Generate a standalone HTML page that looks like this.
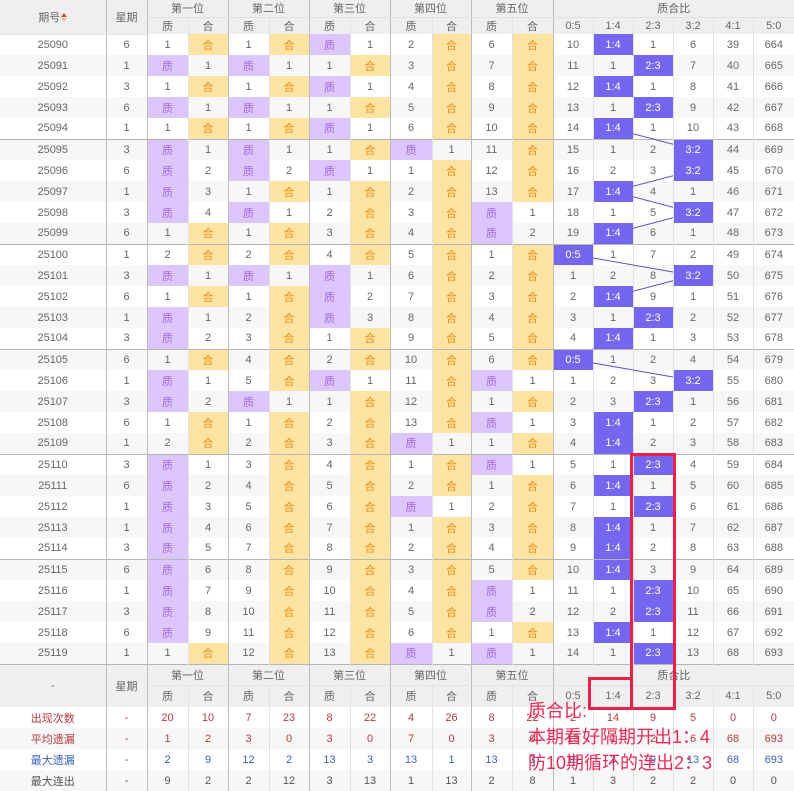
<!DOCTYPE html>
<html><head><meta charset="utf-8">
<style>
*{margin:0;padding:0;box-sizing:border-box}
body{width:794px;height:790px;overflow:hidden;background:#fff;position:relative;font-family:"Liberation Sans","Noto Sans CJK SC",sans-serif}
table{border-collapse:collapse;table-layout:fixed;width:794px;position:absolute;left:0;top:0}
td,th{text-align:center;font-size:11px;color:#666;font-weight:normal;height:21px;padding:0;border-left:1px solid #e2e2e2;white-space:nowrap;overflow:hidden}
th{background:#efefef;color:#666;height:17px}
thead tr:first-child th{border-bottom:1px solid #e2e2e2}
.L{border-left:1px solid #bdbdbd}
tbody tr:nth-child(even) td{background:#f7f7f7}
tbody tr.g td{border-top:1px solid #b5b5b5}
td.q{background:#dcc6fb!important;color:#a36ae0}
td.h{background:#fde4a2!important;color:#ee8a10}
td.b{background:#7466ee!important;color:#fff}
.fh th{height:21px;background:#efefef}
.fh2 th{height:22px}
.ft td{height:21px}
.ft tr:nth-child(even) td{background:#f7f7f7}
.r td{color:#b8393d}.bl td{color:#3c5fc4}.dk td{color:#555}
.sort{display:inline-block;vertical-align:middle;margin-left:1px;width:6px;height:9px;position:relative}
.sort:before{content:"";position:absolute;left:0;top:0;border-left:3px solid transparent;border-right:3px solid transparent;border-bottom:4px solid #e0404a}
.sort:after{content:"";position:absolute;left:0;top:5px;border-left:3px solid transparent;border-right:3px solid transparent;border-top:4px solid #f5b5bd}
.box{position:absolute;border:3px solid #e8204a}
.note{position:absolute;left:528px;color:#ee2a55;font-size:18px;line-height:25px;font-family:"Liberation Sans","Noto Sans CJK SC",sans-serif;white-space:nowrap}
</style></head><body>
<table>
<colgroup><col style="width:106px"><col style="width:41px"><col style="width:41px"><col style="width:40px"><col style="width:41px"><col style="width:40px"><col style="width:41px"><col style="width:40px"><col style="width:42px"><col style="width:39px"><col style="width:41px"><col style="width:41px"><col style="width:40px"><col style="width:40px"><col style="width:40px"><col style="width:40px"><col style="width:40px"><col style="width:41px"></colgroup>
<thead>
<tr><th rowspan="2" style="border-left:none">期号<span class="sort"></span></th><th rowspan="2" class="L">星期</th><th colspan="2" class="L">第一位</th><th colspan="2" class="L">第二位</th><th colspan="2" class="L">第三位</th><th colspan="2" class="L">第四位</th><th colspan="2" class="L">第五位</th><th colspan="6" class="L">质合比</th></tr>
<tr><th class="L">质</th><th>合</th><th class="L">质</th><th>合</th><th class="L">质</th><th>合</th><th class="L">质</th><th>合</th><th class="L">质</th><th>合</th><th class="L">0:5</th><th>1:4</th><th>2:3</th><th>3:2</th><th>4:1</th><th>5:0</th></tr>
</thead>
<tbody>
<tr><td style="border-left:none">25090</td><td class="L">6</td><td class="L">1</td><td class="h">合</td><td class="L">1</td><td class="h">合</td><td class="L q">质</td><td>1</td><td class="L">2</td><td class="h">合</td><td class="L">6</td><td class="h">合</td><td class="L">10</td><td class="b">1:4</td><td>1</td><td>6</td><td>39</td><td>664</td></tr>
<tr><td style="border-left:none">25091</td><td class="L">1</td><td class="L q">质</td><td>1</td><td class="L q">质</td><td>1</td><td class="L">1</td><td class="h">合</td><td class="L">3</td><td class="h">合</td><td class="L">7</td><td class="h">合</td><td class="L">11</td><td>1</td><td class="b">2:3</td><td>7</td><td>40</td><td>665</td></tr>
<tr><td style="border-left:none">25092</td><td class="L">3</td><td class="L">1</td><td class="h">合</td><td class="L">1</td><td class="h">合</td><td class="L q">质</td><td>1</td><td class="L">4</td><td class="h">合</td><td class="L">8</td><td class="h">合</td><td class="L">12</td><td class="b">1:4</td><td>1</td><td>8</td><td>41</td><td>666</td></tr>
<tr><td style="border-left:none">25093</td><td class="L">6</td><td class="L q">质</td><td>1</td><td class="L q">质</td><td>1</td><td class="L">1</td><td class="h">合</td><td class="L">5</td><td class="h">合</td><td class="L">9</td><td class="h">合</td><td class="L">13</td><td>1</td><td class="b">2:3</td><td>9</td><td>42</td><td>667</td></tr>
<tr><td style="border-left:none">25094</td><td class="L">1</td><td class="L">1</td><td class="h">合</td><td class="L">1</td><td class="h">合</td><td class="L q">质</td><td>1</td><td class="L">6</td><td class="h">合</td><td class="L">10</td><td class="h">合</td><td class="L">14</td><td class="b">1:4</td><td>1</td><td>10</td><td>43</td><td>668</td></tr>
<tr class="g"><td style="border-left:none">25095</td><td class="L">3</td><td class="L q">质</td><td>1</td><td class="L q">质</td><td>1</td><td class="L">1</td><td class="h">合</td><td class="L q">质</td><td>1</td><td class="L">11</td><td class="h">合</td><td class="L">15</td><td>1</td><td>2</td><td class="b">3:2</td><td>44</td><td>669</td></tr>
<tr><td style="border-left:none">25096</td><td class="L">6</td><td class="L q">质</td><td>2</td><td class="L q">质</td><td>2</td><td class="L q">质</td><td>1</td><td class="L">1</td><td class="h">合</td><td class="L">12</td><td class="h">合</td><td class="L">16</td><td>2</td><td>3</td><td class="b">3:2</td><td>45</td><td>670</td></tr>
<tr><td style="border-left:none">25097</td><td class="L">1</td><td class="L q">质</td><td>3</td><td class="L">1</td><td class="h">合</td><td class="L">1</td><td class="h">合</td><td class="L">2</td><td class="h">合</td><td class="L">13</td><td class="h">合</td><td class="L">17</td><td class="b">1:4</td><td>4</td><td>1</td><td>46</td><td>671</td></tr>
<tr><td style="border-left:none">25098</td><td class="L">3</td><td class="L q">质</td><td>4</td><td class="L q">质</td><td>1</td><td class="L">2</td><td class="h">合</td><td class="L">3</td><td class="h">合</td><td class="L q">质</td><td>1</td><td class="L">18</td><td>1</td><td>5</td><td class="b">3:2</td><td>47</td><td>672</td></tr>
<tr><td style="border-left:none">25099</td><td class="L">6</td><td class="L">1</td><td class="h">合</td><td class="L">1</td><td class="h">合</td><td class="L">3</td><td class="h">合</td><td class="L">4</td><td class="h">合</td><td class="L q">质</td><td>2</td><td class="L">19</td><td class="b">1:4</td><td>6</td><td>1</td><td>48</td><td>673</td></tr>
<tr class="g"><td style="border-left:none">25100</td><td class="L">1</td><td class="L">2</td><td class="h">合</td><td class="L">2</td><td class="h">合</td><td class="L">4</td><td class="h">合</td><td class="L">5</td><td class="h">合</td><td class="L">1</td><td class="h">合</td><td class="L b">0:5</td><td>1</td><td>7</td><td>2</td><td>49</td><td>674</td></tr>
<tr><td style="border-left:none">25101</td><td class="L">3</td><td class="L q">质</td><td>1</td><td class="L q">质</td><td>1</td><td class="L q">质</td><td>1</td><td class="L">6</td><td class="h">合</td><td class="L">2</td><td class="h">合</td><td class="L">1</td><td>2</td><td>8</td><td class="b">3:2</td><td>50</td><td>675</td></tr>
<tr><td style="border-left:none">25102</td><td class="L">6</td><td class="L">1</td><td class="h">合</td><td class="L">1</td><td class="h">合</td><td class="L q">质</td><td>2</td><td class="L">7</td><td class="h">合</td><td class="L">3</td><td class="h">合</td><td class="L">2</td><td class="b">1:4</td><td>9</td><td>1</td><td>51</td><td>676</td></tr>
<tr><td style="border-left:none">25103</td><td class="L">1</td><td class="L q">质</td><td>1</td><td class="L">2</td><td class="h">合</td><td class="L q">质</td><td>3</td><td class="L">8</td><td class="h">合</td><td class="L">4</td><td class="h">合</td><td class="L">3</td><td>1</td><td class="b">2:3</td><td>2</td><td>52</td><td>677</td></tr>
<tr><td style="border-left:none">25104</td><td class="L">3</td><td class="L q">质</td><td>2</td><td class="L">3</td><td class="h">合</td><td class="L">1</td><td class="h">合</td><td class="L">9</td><td class="h">合</td><td class="L">5</td><td class="h">合</td><td class="L">4</td><td class="b">1:4</td><td>1</td><td>3</td><td>53</td><td>678</td></tr>
<tr class="g"><td style="border-left:none">25105</td><td class="L">6</td><td class="L">1</td><td class="h">合</td><td class="L">4</td><td class="h">合</td><td class="L">2</td><td class="h">合</td><td class="L">10</td><td class="h">合</td><td class="L">6</td><td class="h">合</td><td class="L b">0:5</td><td>1</td><td>2</td><td>4</td><td>54</td><td>679</td></tr>
<tr><td style="border-left:none">25106</td><td class="L">1</td><td class="L q">质</td><td>1</td><td class="L">5</td><td class="h">合</td><td class="L q">质</td><td>1</td><td class="L">11</td><td class="h">合</td><td class="L q">质</td><td>1</td><td class="L">1</td><td>2</td><td>3</td><td class="b">3:2</td><td>55</td><td>680</td></tr>
<tr><td style="border-left:none">25107</td><td class="L">3</td><td class="L q">质</td><td>2</td><td class="L q">质</td><td>1</td><td class="L">1</td><td class="h">合</td><td class="L">12</td><td class="h">合</td><td class="L">1</td><td class="h">合</td><td class="L">2</td><td>3</td><td class="b">2:3</td><td>1</td><td>56</td><td>681</td></tr>
<tr><td style="border-left:none">25108</td><td class="L">6</td><td class="L">1</td><td class="h">合</td><td class="L">1</td><td class="h">合</td><td class="L">2</td><td class="h">合</td><td class="L">13</td><td class="h">合</td><td class="L q">质</td><td>1</td><td class="L">3</td><td class="b">1:4</td><td>1</td><td>2</td><td>57</td><td>682</td></tr>
<tr><td style="border-left:none">25109</td><td class="L">1</td><td class="L">2</td><td class="h">合</td><td class="L">2</td><td class="h">合</td><td class="L">3</td><td class="h">合</td><td class="L q">质</td><td>1</td><td class="L">1</td><td class="h">合</td><td class="L">4</td><td class="b">1:4</td><td>2</td><td>3</td><td>58</td><td>683</td></tr>
<tr class="g"><td style="border-left:none">25110</td><td class="L">3</td><td class="L q">质</td><td>1</td><td class="L">3</td><td class="h">合</td><td class="L">4</td><td class="h">合</td><td class="L">1</td><td class="h">合</td><td class="L q">质</td><td>1</td><td class="L">5</td><td>1</td><td class="b">2:3</td><td>4</td><td>59</td><td>684</td></tr>
<tr><td style="border-left:none">25111</td><td class="L">6</td><td class="L q">质</td><td>2</td><td class="L">4</td><td class="h">合</td><td class="L">5</td><td class="h">合</td><td class="L">2</td><td class="h">合</td><td class="L">1</td><td class="h">合</td><td class="L">6</td><td class="b">1:4</td><td>1</td><td>5</td><td>60</td><td>685</td></tr>
<tr><td style="border-left:none">25112</td><td class="L">1</td><td class="L q">质</td><td>3</td><td class="L">5</td><td class="h">合</td><td class="L">6</td><td class="h">合</td><td class="L q">质</td><td>1</td><td class="L">2</td><td class="h">合</td><td class="L">7</td><td>1</td><td class="b">2:3</td><td>6</td><td>61</td><td>686</td></tr>
<tr><td style="border-left:none">25113</td><td class="L">1</td><td class="L q">质</td><td>4</td><td class="L">6</td><td class="h">合</td><td class="L">7</td><td class="h">合</td><td class="L">1</td><td class="h">合</td><td class="L">3</td><td class="h">合</td><td class="L">8</td><td class="b">1:4</td><td>1</td><td>7</td><td>62</td><td>687</td></tr>
<tr><td style="border-left:none">25114</td><td class="L">3</td><td class="L q">质</td><td>5</td><td class="L">7</td><td class="h">合</td><td class="L">8</td><td class="h">合</td><td class="L">2</td><td class="h">合</td><td class="L">4</td><td class="h">合</td><td class="L">9</td><td class="b">1:4</td><td>2</td><td>8</td><td>63</td><td>688</td></tr>
<tr class="g"><td style="border-left:none">25115</td><td class="L">6</td><td class="L q">质</td><td>6</td><td class="L">8</td><td class="h">合</td><td class="L">9</td><td class="h">合</td><td class="L">3</td><td class="h">合</td><td class="L">5</td><td class="h">合</td><td class="L">10</td><td class="b">1:4</td><td>3</td><td>9</td><td>64</td><td>689</td></tr>
<tr><td style="border-left:none">25116</td><td class="L">1</td><td class="L q">质</td><td>7</td><td class="L">9</td><td class="h">合</td><td class="L">10</td><td class="h">合</td><td class="L">4</td><td class="h">合</td><td class="L q">质</td><td>1</td><td class="L">11</td><td>1</td><td class="b">2:3</td><td>10</td><td>65</td><td>690</td></tr>
<tr><td style="border-left:none">25117</td><td class="L">3</td><td class="L q">质</td><td>8</td><td class="L">10</td><td class="h">合</td><td class="L">11</td><td class="h">合</td><td class="L">5</td><td class="h">合</td><td class="L q">质</td><td>2</td><td class="L">12</td><td>2</td><td class="b">2:3</td><td>11</td><td>66</td><td>691</td></tr>
<tr><td style="border-left:none">25118</td><td class="L">6</td><td class="L q">质</td><td>9</td><td class="L">11</td><td class="h">合</td><td class="L">12</td><td class="h">合</td><td class="L">6</td><td class="h">合</td><td class="L">1</td><td class="h">合</td><td class="L">13</td><td class="b">1:4</td><td>1</td><td>12</td><td>67</td><td>692</td></tr>
<tr><td style="border-left:none">25119</td><td class="L">1</td><td class="L">1</td><td class="h">合</td><td class="L">12</td><td class="h">合</td><td class="L">13</td><td class="h">合</td><td class="L q">质</td><td>1</td><td class="L q">质</td><td>1</td><td class="L">14</td><td>1</td><td class="b">2:3</td><td>13</td><td>68</td><td>693</td></tr>
</tbody>
<tbody class="fhb">
<tr class="fh"><th rowspan="2" style="border-left:none;border-top:1px solid #b5b5b5">-</th><th rowspan="2" class="L" style="border-top:1px solid #b5b5b5">星期</th><th colspan="2" class="L" style="border-top:1px solid #b5b5b5;border-bottom:1px solid #e2e2e2">第一位</th><th colspan="2" class="L" style="border-top:1px solid #b5b5b5;border-bottom:1px solid #e2e2e2">第二位</th><th colspan="2" class="L" style="border-top:1px solid #b5b5b5;border-bottom:1px solid #e2e2e2">第三位</th><th colspan="2" class="L" style="border-top:1px solid #b5b5b5;border-bottom:1px solid #e2e2e2">第四位</th><th colspan="2" class="L" style="border-top:1px solid #b5b5b5;border-bottom:1px solid #e2e2e2">第五位</th><th colspan="6" class="L" style="border-top:1px solid #b5b5b5;border-bottom:1px solid #e2e2e2">质合比</th></tr>
<tr class="fh fh2"><th class="L">质</th><th>合</th><th class="L">质</th><th>合</th><th class="L">质</th><th>合</th><th class="L">质</th><th>合</th><th class="L">质</th><th>合</th><th class="L">0:5</th><th>1:4</th><th>2:3</th><th>3:2</th><th>4:1</th><th>5:0</th></tr>
</tbody>
<tbody class="ft">
<tr class="r"><td style="border-left:none">出现次数</td><td class="L">-</td><td class="L">20</td><td>10</td><td class="L">7</td><td>23</td><td class="L">8</td><td>22</td><td class="L">4</td><td>26</td><td class="L">8</td><td>22</td><td class="L">2</td><td>14</td><td>9</td><td>5</td><td>0</td><td>0</td></tr>
<tr class="r"><td style="border-left:none">平均遗漏</td><td class="L">-</td><td class="L">1</td><td>2</td><td class="L">3</td><td>0</td><td class="L">3</td><td>0</td><td class="L">7</td><td>0</td><td class="L">3</td><td>0</td><td class="L">13</td><td>1</td><td>2</td><td>6</td><td>68</td><td>693</td></tr>
<tr class="bl"><td style="border-left:none">最大遗漏</td><td class="L">-</td><td class="L">2</td><td>9</td><td class="L">12</td><td>2</td><td class="L">13</td><td>3</td><td class="L">13</td><td>1</td><td class="L">13</td><td>3</td><td class="L">19</td><td>3</td><td>9</td><td>13</td><td>68</td><td>693</td></tr>
<tr class="dk"><td style="border-left:none">最大连出</td><td class="L">-</td><td class="L">9</td><td>2</td><td class="L">2</td><td>12</td><td class="L">3</td><td>13</td><td class="L">1</td><td>13</td><td class="L">2</td><td>8</td><td class="L">1</td><td>3</td><td>2</td><td>2</td><td>0</td><td>0</td></tr>
</tbody>
</table>
<svg width="794" height="790" style="position:absolute;left:0;top:0;pointer-events:none">
<defs><mask id="m" maskUnits="userSpaceOnUse" x="0" y="0" width="794" height="790">
<rect x="0" y="0" width="794" height="790" fill="#fff"/>
<g fill="#000">
<rect x="593" y="34" width="40" height="21"/><rect x="633" y="55" width="40" height="21"/><rect x="593" y="76" width="40" height="21"/><rect x="633" y="97" width="40" height="21"/><rect x="593" y="118" width="40" height="21"/>
<rect x="673" y="139" width="40" height="21"/><rect x="673" y="160" width="40" height="21"/><rect x="593" y="181" width="40" height="21"/><rect x="673" y="202" width="40" height="21"/><rect x="593" y="223" width="40" height="21"/>
<rect x="553" y="244" width="40" height="21"/><rect x="673" y="265" width="40" height="21"/><rect x="593" y="286" width="40" height="21"/><rect x="633" y="307" width="40" height="21"/><rect x="593" y="328" width="40" height="21"/>
<rect x="553" y="349" width="40" height="21"/><rect x="673" y="370" width="40" height="21"/><rect x="633" y="391" width="40" height="21"/><rect x="593" y="412" width="40" height="21"/><rect x="593" y="433" width="40" height="21"/>
<rect x="633" y="454" width="40" height="21"/><rect x="593" y="475" width="40" height="21"/><rect x="633" y="496" width="40" height="21"/><rect x="593" y="517" width="40" height="21"/><rect x="593" y="538" width="40" height="21"/>
<rect x="593" y="559" width="40" height="21"/><rect x="633" y="580" width="40" height="21"/><rect x="633" y="601" width="40" height="21"/><rect x="593" y="622" width="40" height="21"/><rect x="633" y="643" width="40" height="21"/>
</g></mask></defs>
<polyline mask="url(#m)" fill="none" stroke="#5a52c8" stroke-width="1" points="613,44.5 653,65.5 613,86.5 653,107.5 613,128.5 693,149.5 693,170.5 613,191.5 693,212.5 613,233.5 573,254.5 693,275.5 613,296.5 653,317.5 613,338.5 573,359.5 693,380.5 653,401.5 613,422.5 613,443.5 653,464.5 613,485.5 653,506.5 613,527.5 613,548.5 613,569.5 653,590.5 653,611.5 613,632.5 653,653.5"/>
</svg>
<div class="box" style="left:630px;top:453px;width:46px;height:257px"></div>
<div class="box" style="left:588px;top:677px;width:45px;height:33px"></div>
<div class="note" style="top:699px">质合比:</div>
<div class="note" style="top:725px">本期看好隔期开出1：4</div>
<div class="note" style="top:751px">防10期循环的连出2：3</div>
</body></html>
